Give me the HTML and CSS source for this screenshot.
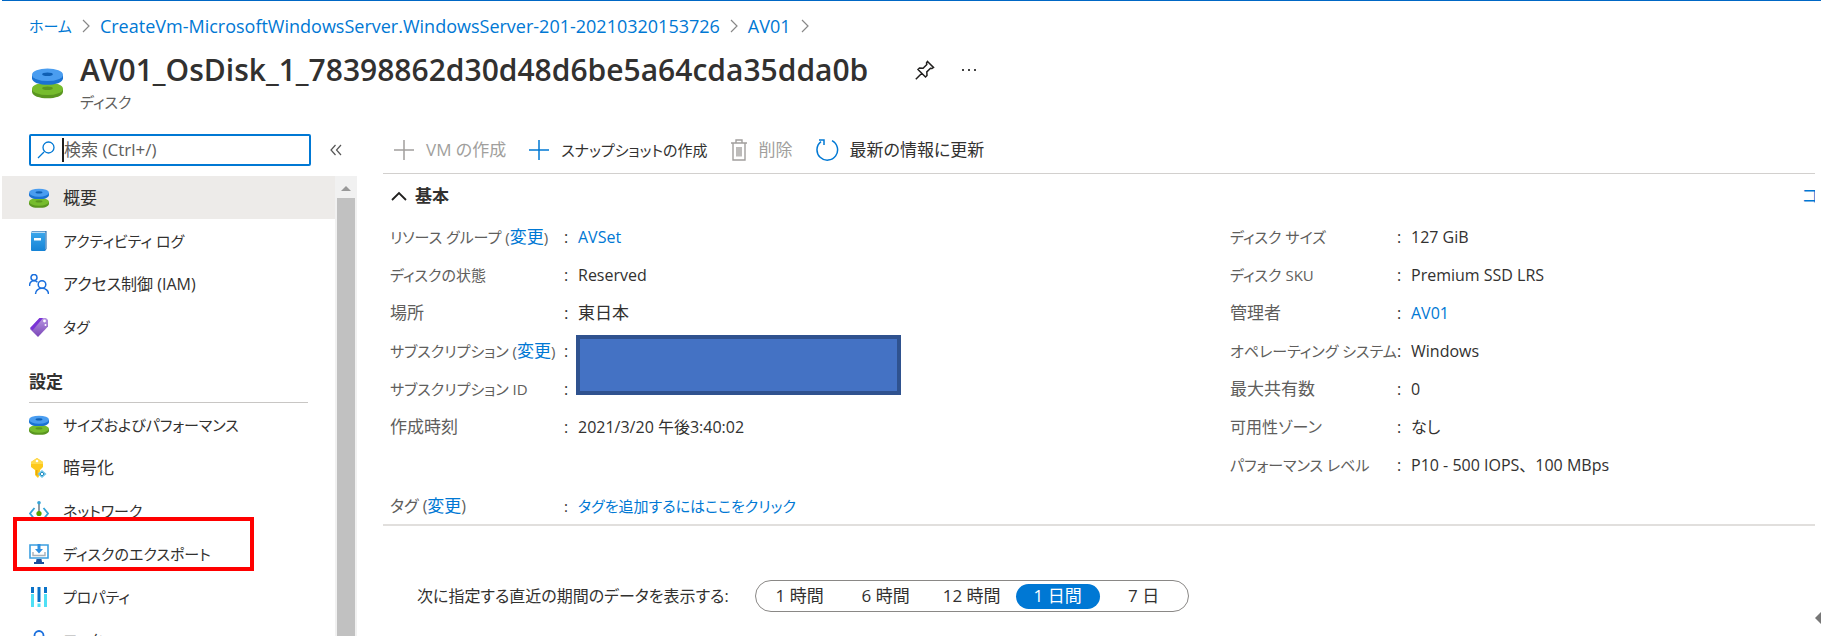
FILE: index.html
```html
<!DOCTYPE html>
<html lang="ja">
<head>
<meta charset="utf-8">
<title>AV01_OsDisk - ディスク</title>
<link rel="stylesheet" href="styles.css">
</head>
<body>
<svg class="defs" width="0" height="0" aria-hidden="true">
  <defs>
    <linearGradient id="purple" x1="0" y1="0" x2="0" y2="1"><stop offset="0" stop-color="#b796e0"/><stop offset="1" stop-color="#7a45b8"/></linearGradient>
    <linearGradient id="book" x1="0" y1="0" x2="0" y2="1"><stop offset="0" stop-color="#3aa5ea"/><stop offset="1" stop-color="#1583d6"/></linearGradient>
    <symbol id="disk" viewBox="0 0 32 32">
      <path d="M0 22v3c0 9 32 9 32 0v-3z" fill="#5a9620"/>
      <ellipse cx="16" cy="22" rx="16" ry="6.5" fill="#76bc2d"/>
      <ellipse cx="16" cy="21.500" rx="5.500" ry="1.800" fill="#5a9620"/>
      <path d="M0 8v3c0 9 32 9 32 0V8z" fill="#1a72d2"/>
      <ellipse cx="16" cy="7.500" rx="16" ry="6.500" fill="#4a9df0"/>
      <ellipse cx="16" cy="7" rx="5.500" ry="1.800" fill="#0f5fb4"/>
    </symbol>
  </defs>
</svg>
<div class="blade">
  <nav class="breadcrumb" aria-label="階層">
    <a href="#" class="kana">ホーム</a>
    <svg class="sep" viewBox="0 0 8 14"><path d="M1 1l6 6-6 6"/></svg>
    <a href="#">CreateVm-MicrosoftWindowsServer.WindowsServer-201-20210320153726</a>
    <svg class="sep" viewBox="0 0 8 14"><path d="M1 1l6 6-6 6"/></svg>
    <a href="#">AV01</a>
    <svg class="sep" viewBox="0 0 8 14"><path d="M1 1l6 6-6 6"/></svg>
  </nav>

  <header class="header">
    <svg class="header-icon"><use href="#disk"/></svg>
    <div class="header-text">
      <div class="title-row">
        <h1>AV01_OsDisk_1_78398862d30d48d6be5a64cda35dda0b</h1>
        <button class="icon-button" aria-label="ピン留め"><svg width="20" height="20" viewBox="0 0 20 20"><path d="M12.500 1.500l6 6-1.500 1-1.500-.3-3.700 3.700.2 3.600-1.500 1.500-7.500-7.500 1.500-1.500 3.600.2 3.700-3.700-.3-1.500zM6.800 13.200l-6 6" fill="none" stroke="#201f1e" stroke-width="1.500"/></svg></button>
        <button class="icon-button" aria-label="その他"><svg width="16" height="4" viewBox="0 0 16 4"><path d="M1 1h2v2H1zM7 1h2v2H7zM13 1h2v2h-2z" fill="#444"/></svg></button>
      </div>
      <p class="subtitle">ディスク</p>
    </div>
  </header>

  <div class="body">
    <aside class="side">
      <div class="search-row">
        <label class="search">
          <svg width="18" height="18" viewBox="0 0 18 18"><path d="M7 11L1 17M17 6.500a5.500 5.500 0 1 1-11 0 5.500 5.500 0 0 1 11 0z" fill="none" stroke="#0078d4" stroke-width="1.300"/></svg>
          <span class="caret"></span>
          <input type="text" placeholder="検索 (Ctrl+/)" aria-label="検索">
        </label>
        <button class="icon-button" aria-label="メニューを折りたたむ"><svg width="12" height="12" viewBox="0 0 12 12"><path d="M5.500 1L1 6l4.500 5M11 1L6.500 6l4.500 5" fill="none" stroke="#555" stroke-width="1.200"/></svg></button>
      </div>
      <div class="menu-wrap">
        <nav class="menu" aria-label="リソース メニュー">
          <a href="#" class="item current"><svg class="ico" viewBox="0 0 32 32"><use href="#disk"/></svg>概要</a>
          <a href="#" class="item kana"><svg class="ico" viewBox="0 0 20 20"><path d="M3 0h14.500v18L16 20V2H2z" fill="#0f5fa8"/><path d="M3 .5h13.500v18H16V2H2z" fill="#b9dcf5"/><path d="M2 2h14v18H3a1 1 0 0 1-1-1z" fill="url(#book)"/><path d="M5 7h7v2.500H5z" fill="#fff"/></svg>アクティビティ ログ</a>
          <a href="#" class="item mixed"><svg class="ico" viewBox="0 0 20 20" fill="none" stroke="#1a6fdd" stroke-width="1.500"><circle cx="5" cy="3.500" r="3"/><path d="M.5 12c0-3.500 2-5.300 4.500-5.300 1.500 0 2.700.6 3.500 1.500"/><circle cx="13" cy="10.500" r="3.800"/><path d="M6.500 20c0-3.500 3-5.700 6.500-5.700s6.500 2.200 6.500 5.700"/></svg>アクセス制御 (IAM)</a>
          <a href="#" class="item kana"><svg class="ico" viewBox="0 0 20 20"><path d="M10.500 1H17l2 2v6.500L9 20 1 12z" fill="url(#purple)"/><path d="M10.500 1H14L3.500 13.500 1 11z" fill="#7a33d6"/><circle cx="15.500" cy="4" r="1.400" fill="#fff"/><circle cx="16.500" cy="8" r="1" fill="#fff"/></svg>タグ</a>
          <h2 class="group">設定</h2>
          <a href="#" class="item kana"><svg class="ico" viewBox="0 0 32 32"><use href="#disk"/></svg>サイズおよびパフォーマンス</a>
          <a href="#" class="item"><svg class="ico" viewBox="0 0 20 20"><path d="M8 0l6 4v5l-3 3v1.500l-1.500 1.500 1.500 1.500L9 20l-3-3V12L2 9V4z" fill="#fdc91c"/><path d="M8 0l6 4v2H2V4z" fill="#ffdb4d"/><circle cx="8" cy="3" r="1.300" fill="#fff"/><path d="M7 12h1.500v6L7 17z" fill="#e8a90c"/><path d="M13 12l4.500 4-4.500 4-4.500-4z" fill="#6fc3e6"/><path d="M13 14l2 2-2 2-2-2z" fill="#fff" stroke="#2b8fc0"/></svg>暗号化</a>
          <a href="#" class="item kana"><svg class="ico" viewBox="0 0 20 20" fill="none"><path d="M5.500 7L1 12.500l4.500 5.500M14.500 7l4.500 5.500-4.500 5.500" stroke="#35a3d6" stroke-width="1.800"/><path d="M10 2v10" stroke="#6b7a85" stroke-width="1.500"/><circle cx="10" cy="1.800" r="1.800" fill="#35a3d6"/><circle cx="10" cy="12.500" r="2.600" fill="#57a300"/></svg>ネットワーク</a>
          <a href="#" class="item kana marked"><svg class="ico" viewBox="0 0 20 20"><path d="M1 1h18v13H1z" fill="#fff" stroke="#3b9fe0" stroke-width="1.600"/><path d="M8.500 0h3v5H14l-4 4.500L6 5h2.500z" fill="#2f8fe0"/><path d="M4 8v3.500h12V8" fill="none" stroke="#a8b0b8" stroke-width="1.400"/><path d="M7.500 15h5l.5 3h2v2H5v-2h2z" fill="#1c4f9c"/></svg>ディスクのエクスポート</a>
          <a href="#" class="item kana"><svg class="ico" viewBox="0 0 20 20"><path d="M2 7h3v13H2zM15 7h3v13h-3z" fill="#4fe0f5"/><path d="M2 0h3v6H2zM15 0h3v6h-3zM8.500 0h3v15h-3z" fill="#0a72c8"/><path d="M8.500 16.500h3V20h-3z" fill="#4fe0f5"/></svg>プロパティ</a>
          <a href="#" class="item kana"><svg class="ico" viewBox="0 0 20 20"><path d="M5.500 9V5.500a4.500 4.500 0 0 1 9 0V9" fill="none" stroke="#1a6fdd" stroke-width="1.800"/><path d="M3 9h14v11H3z" fill="#1a6fdd"/></svg>ロック</a>
        </nav>
        <div class="scroll" aria-hidden="true"><svg width="22" height="22" viewBox="0 0 22 22"><path d="M6 15l5-5 5 5z" fill="#999"/></svg><div class="thumb"></div></div>
      </div>
    </aside>

    <main class="main">
      <div class="commands">
        <button disabled><svg width="22" height="22" viewBox="0 0 22 22"><path d="M11 1v20M1 11h20" stroke="#a19f9d" stroke-width="1.500"/></svg>VM の作成</button>
        <button class="kana"><svg width="22" height="22" viewBox="0 0 22 22"><path d="M11 1v20M1 11h20" stroke="#0078d4" stroke-width="1.500"/></svg>スナップショットの作成</button>
        <button disabled><svg width="18" height="22" viewBox="0 0 18 22"><path d="M1 4h16M6 4V1h6v3M3 4v17h12V4M7 8v9.500M9 8v9.500M11 8v9.500" fill="none" stroke="#a19f9d" stroke-width="1.400"/></svg>削除</button>
        <button><svg width="24" height="24" viewBox="0 0 24 24"><path d="M17 2.700A10.300 10.300 0 1 1 6 3.700M4 2h5v5" fill="none" stroke="#0078d4" stroke-width="1.500"/></svg>最新の情報に更新</button>
      </div>

      <div class="essentials-head">
        <button class="toggle"><svg width="16" height="10" viewBox="0 0 16 10"><path d="M1 9l7-7 7 7" fill="none" stroke="#201f1e" stroke-width="1.800"/></svg>基本</button>
        <a href="#" class="cost">コスト</a>
      </div>

      <div class="essentials">
        <dl>
          <div><dt class="kana">リソース グループ (<a href="#">変更</a>)</dt><dd><a href="#">AVSet</a></dd></div>
          <div><dt class="kana">ディスクの状態</dt><dd>Reserved</dd></div>
          <div><dt>場所</dt><dd class="kanji">東日本</dd></div>
          <div><dt class="kana">サブスクリプション (<a href="#">変更</a>)</dt><dd class="masked"><span class="mask"></span></dd></div>
          <div><dt class="kana">サブスクリプション ID</dt><dd></dd></div>
          <div><dt>作成時刻</dt><dd>2021/3/20 午後3:40:02</dd></div>
        </dl>
        <dl class="wide">
          <div><dt class="kana">ディスク サイズ</dt><dd>127 GiB</dd></div>
          <div><dt class="kana">ディスク SKU</dt><dd>Premium SSD LRS</dd></div>
          <div><dt>管理者</dt><dd><a href="#">AV01</a></dd></div>
          <div><dt class="kana">オペレーティング システム</dt><dd>Windows</dd></div>
          <div><dt>最大共有数</dt><dd>0</dd></div>
          <div><dt class="mixed">可用性ゾーン</dt><dd>なし</dd></div>
          <div><dt class="kana">パフォーマンス レベル</dt><dd class="full">P10 - 500 IOPS、100 MBps</dd></div>
        </dl>
      </div>
      <dl class="tags">
        <div><dt class="mixed">タグ (<a href="#">変更</a>)</dt><dd class="kana"><a href="#">タグを追加するにはここをクリック</a></dd></div>
      </dl>

      <div class="range">
        <span id="range-label" class="mixed">次に指定する直近の期間のデータを表示する:</span>
        <div class="pills" role="group" aria-labelledby="range-label">
          <button>1 時間</button><button>6 時間</button><button>12 時間</button><button class="on" aria-pressed="true">1 日間</button><button>7 日</button>
        </div>
      </div>
    </main>
  </div>
  <svg class="edge" width="6" height="12" viewBox="0 0 6 12" aria-hidden="true"><path d="M0 6l6-6v12z" fill="#777"/></svg>
</div>
</body>
</html>
```
FILE: styles.css
```css
*, *::before, *::after { box-sizing: border-box; }
html, body { height: 100%; margin: 0; }
body {
  overflow: hidden;
  background: #fff;
  color: #323130;
  font: 17px/24px "Open Sans", "Noto Sans CJK JP", sans-serif;
  font-feature-settings: "palt";
}
a { color: #0078d4; text-decoration: none; }
button {
  padding: 0;
  border: 0;
  background: none;
  color: inherit;
  font: inherit;
  font-feature-settings: inherit;
}
svg { display: block; flex: none; }
.defs { position: absolute; }

.blade {
  position: relative;
  display: flex;
  flex-direction: column;
  height: 100%;
  margin-left: 2px;
  border-top: 1px solid #0067c5;
  overflow: hidden;
}
.breadcrumb {
  display: flex;
  align-items: center;
  gap: 10px;
  padding: 13px 0 0 27px;
  font-size: 18px;
}
.sep { width: 8px; height: 14px; fill: none; stroke: #888; stroke-width: 1.2; }

.header { display: flex; gap: 17px; padding: 12px 0 0 30px; }
.header-icon { width: 31px; height: 32px; margin-top: 17px; }
.title-row { display: flex; align-items: center; gap: 26px; height: 40px; }
h1 { margin: 0 21px 0 0; font-size: 30px; font-weight: 600; line-height: 40px; }
.subtitle { margin: 0; color: #605e5c; font-size: 15px; }
.icon-button { flex: none; }

.body { display: flex; flex: 1; min-height: 0; padding-top: 20px; }
.side { display: flex; flex: none; flex-direction: column; width: 355px; }
.search-row { display: flex; align-items: center; gap: 19px; padding-left: 27px; }
.search {
  display: flex;
  align-items: center;
  width: 282px;
  height: 32px;
  padding-left: 6px;
  border: 2px solid #0078d4;
  border-radius: 2px;
}
.caret { width: 2px; height: 24px; margin-left: 7px; background: #201f1e; }
input {
  flex: 1;
  min-width: 0;
  padding: 0;
  border: 0;
  outline: 0;
  background: none;
  font: inherit;
}
input::placeholder { color: #605e5c; opacity: 1; }
.menu-wrap { display: flex; flex: 1; min-height: 0; margin-top: 10px; }
.menu { flex: 1; overflow: hidden; }
.item {
  display: flex;
  align-items: center;
  gap: 14px;
  height: 43px;
  padding-left: 27px;
  color: #323130;
}
.current { background: #edebe9; }
.ico { width: 20px; height: 20px; }
.group {
  margin: 14px 27px 0 27px;
  padding: 8px 0 8px;
  border-bottom: 1px solid #c8c6c4;
  font-size: 17px;
  font-weight: 600;
  line-height: 24px;
}
.marked { position: relative; }
.marked::after {
  content: "";
  position: absolute;
  inset: -15px auto 4px 11px;
  width: 241px;
  border: 4px solid #f00;
}
.scroll { display: flex; flex-direction: column; width: 22px; background: #f1f1f1; }
.thumb { flex: 1; margin: 0 2px; background: #c1c1c1; }

.main { flex: 1; min-width: 0; padding: 0 6px 0 26px; }
.commands {
  display: flex;
  align-items: center;
  gap: 22px;
  height: 40px;
  padding: 0 0 8px 10px;
  border-bottom: 1px solid #d2d0ce;
}
.commands button { display: flex; align-items: center; gap: 11px; white-space: nowrap; }
.commands button:disabled { color: #a19f9d; }
.essentials-head { display: flex; align-items: center; justify-content: space-between; height: 44px; padding-left: 8px; overflow: hidden; }
.toggle { display: flex; align-items: center; gap: 8px; font-weight: 600; }
.cost { flex: none; width: 13px; overflow: hidden; white-space: nowrap; }
dl { margin: 0; }
.essentials { display: grid; grid-template-columns: 840px 1fr; padding: 0 0 0 7px; }
dl > div { display: grid; grid-template-columns: 174px 1fr; align-items: center; height: 38px; white-space: nowrap; }
.wide > div { grid-template-columns: 167px 1fr; }
dt { color: #605e5c; }
dd { display: flex; align-items: center; margin: 0; font-size: 16px; }
dd::before { content: ":"; width: 14px; }
.masked { position: relative; }
.mask {
  position: absolute;
  top: -4px;
  left: 12px;
  width: 325px;
  height: 60px;
  border: 4px solid #2f528f;
  background: #4472c4;
}
.tags { padding: 4px 0 0 7px; border-bottom: 2px solid #e1dfdd; }
.tags > div { height: 36px; }
.range { display: flex; align-items: center; gap: 26px; padding: 54px 0 0 34px; white-space: nowrap; }
.pills {
  display: flex;
  align-items: center;
  gap: 2px;
  height: 32px;
  padding: 0 2px;
  border: 1px solid #8a8886;
  border-radius: 16px;
}
.pills button { height: 25px; min-width: 84px; border-radius: 13px; }
.pills .on { background: #0078d4; color: #fff; }
.edge { position: absolute; right: 0; bottom: 12px; }

.kana { font-size: 15px; }
.mixed { font-size: 16px; }
.kanji, dt a { font-size: 17px; }
.full { font-feature-settings: normal; }
```
